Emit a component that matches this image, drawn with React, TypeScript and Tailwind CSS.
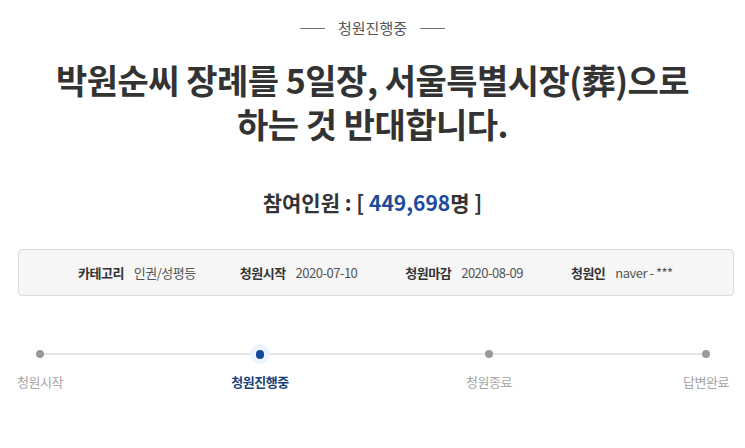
import React from "react";

const font = { fontFamily: '"Noto Sans CJK KR", "Noto Sans", sans-serif' };

const steps = [
  { label: "청원시작", active: false, gap: "ml-0" },
  { label: "청원진행중", active: true, gap: "ml-[164px]" },
  { label: "청원종료", active: false, gap: "ml-[173px]" },
  { label: "답변완료", active: false, gap: "ml-[161px]" },
];

const App: React.FC = () => {
  return (
    <div
      className="w-[745px] h-[448px] bg-white text-[#333] overflow-hidden"
      style={font}
    >
      <div className="pt-[17px] flex items-center justify-center gap-[13px]">
        <span className="w-[25px] h-px bg-[#777]" />
        <span className="text-[15px] leading-[22px] text-[#555]">청원진행중</span>
        <span className="w-[25px] h-px bg-[#777]" />
      </div>

      <h1 className="mt-[19px] text-center text-[34px] leading-[44px] font-bold text-[#333] tracking-[-0.5px]">
        <span className="block">박원순씨 장례를 5일장, 서울특별시장(葬)으로</span>
        <span className="block">하는 것 반대합니다.</span>
      </h1>

      <div className="mt-[42px] text-center text-[21px] leading-[28px] font-bold text-[#333]">
        참여인원 : [ <span className="text-[#1e4b9a]">449,698</span>명 ]
      </div>

      <div className="mt-[33px] mx-[18px] w-[716px] h-[47px] rounded-[4px] border border-[#dcdcdc] bg-[#f6f6f6] flex items-center text-[13px] tracking-[-0.5px]">
        <div className="ml-[59px] flex items-center gap-[10px]">
          <span className="font-bold text-[#333]">카테고리</span>
          <span className="text-[#555]">인권/성평등</span>
        </div>
        <div className="ml-[44px] flex items-center gap-[10px]">
          <span className="font-bold text-[#333]">청원시작</span>
          <span className="text-[#555]">2020-07-10</span>
        </div>
        <div className="ml-[48px] flex items-center gap-[10px]">
          <span className="font-bold text-[#333]">청원마감</span>
          <span className="text-[#555]">2020-08-09</span>
        </div>
        <div className="ml-[48px] flex items-center gap-[10px]">
          <span className="font-bold text-[#333]">청원인</span>
          <span className="text-[#555]">naver - ***</span>
        </div>
      </div>

      <div className="relative mt-[50px] ml-[12px] flex">
        <div className="absolute left-[28px] w-[666px] top-[7px] h-[2px] bg-[#e5e5e5]" />
        {steps.map((s) => (
          <div
            key={s.label}
            className={`relative w-[56px] flex flex-col items-center ${s.gap}`}
          >
            <div className="h-[16px] flex items-center justify-center">
              {s.active ? (
                <span className="w-[20px] h-[20px] rounded-full bg-[#eef4fd] flex items-center justify-center">
                  <span className="w-[8px] h-[9px] rounded-full bg-[#0f4a9c]" />
                </span>
              ) : (
                <span className="w-[8px] h-[8px] rounded-full bg-[#9a9a9a]" />
              )}
            </div>
            <span
              className={
                s.active
                  ? "mt-[10px] whitespace-nowrap text-[13px] leading-[20px] font-bold text-[#1b3f7a] tracking-[-0.5px]"
                  : "mt-[10px] whitespace-nowrap text-[13px] leading-[20px] text-[#a5a5a5] tracking-[-0.5px]"
              }
            >
              {s.label}
            </span>
          </div>
        ))}
      </div>
    </div>
  );
};

export default App;
